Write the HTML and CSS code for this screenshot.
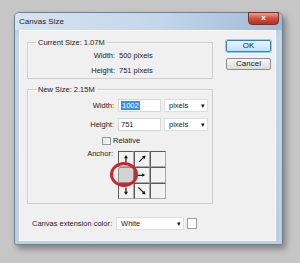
FILE: index.html
```html
<!DOCTYPE html>
<html lang="en">
<head>
  <meta charset="UTF-8" />
  <title>Canvas Size</title>
  <link rel="stylesheet" href="styles.css">
</head>
<body>
<div class="window">
  <div class="titlebar">
    <span class="title">Canvas Size</span>
    <span class="close">x</span>
  </div>

  <div class="client">
    <div class="main">
      <!-- Current size -->
      <div class="group">
        <span class="group-title">Current Size: 1.07M</span>
        <div class="info">
          <span class="lbl">Width:</span><span>500 pixels</span>
          <span class="lbl">Height:</span><span>751 pixels</span>
        </div>
      </div>

      <!-- New size -->
      <div class="group group-new">
        <span class="group-title">New Size: 2.15M</span>
        <div class="form">
          <span class="lbl">Width:</span>
          <div class="fields">
            <span class="input"><span class="sel">1002</span></span>
            <span class="select">pixels<span class="caret">▾</span></span>
          </div>
          <span class="lbl">Height:</span>
          <div class="fields">
            <span class="input">751</span>
            <span class="select">pixels<span class="caret">▾</span></span>
          </div>
          <div class="relative"><span class="check"></span>Relative</div>
          <span class="lbl lbl-top">Anchor:</span>
          <div class="anchor">
            <span class="cell">
              <svg viewBox="0 0 14 14"><path d="M7 12V5" stroke="#111" stroke-width="1.6"/><path d="M7 1.5L4.3 6h5.4z" fill="#111"/></svg>
            </span>
            <span class="cell">
              <svg viewBox="0 0 14 14"><path d="M3 11L9.5 4.5" stroke="#111" stroke-width="1.6"/><path d="M12 2L6.8 3.6l3.6 3.6z" fill="#111"/></svg>
            </span>
            <span class="cell"></span>
            <span class="cell active"></span>
            <span class="cell">
              <svg viewBox="0 0 14 14"><path d="M1 7.5h7" stroke="#111" stroke-width="1.6"/><path d="M11.5 7L7 4.5v5z" fill="#111"/></svg>
            </span>
            <span class="cell"></span>
            <span class="cell">
              <svg viewBox="0 0 14 14"><path d="M7 2v7" stroke="#111" stroke-width="1.6"/><path d="M7 12.5L4.3 8h5.4z" fill="#111"/></svg>
            </span>
            <span class="cell">
              <svg viewBox="0 0 14 14"><path d="M2 2l7 7" stroke="#111" stroke-width="1.6"/><path d="M12 12L6.8 10.4l3.6-3.6z" fill="#111"/></svg>
            </span>
            <span class="cell"></span>
            <span class="ring"></span>
          </div>
        </div>
      </div>

      <div class="ext">
        <span>Canvas extension color:</span>
        <span class="select select-wide">White<span class="caret">▾</span></span>
        <span class="swatch"></span>
      </div>
    </div>

    <div class="buttons">
      <span class="btn btn-default">OK</span>
      <span class="btn">Cancel</span>
    </div>
  </div>
</div>
</body>
</html>
```

FILE: styles.css
```css
* {
  box-sizing: border-box;
}

body {
  margin: 0;
  padding: 12px 0 0 14px;
  background: #c6c6c6;
  font-family: 'Liberation Sans', Arial, sans-serif;
  font-size: 7.5px;
  color: #222;
  height: 263px;
  overflow: hidden;
}

.window {
  width: 269px;
  height: 233px;
  border: 1px solid #6f8094;
  border-radius: 5px 5px 2px 2px;
  background: linear-gradient(to bottom, #b3c9e0, #c4d5e8 12%, #bccfe3);
  box-shadow: 3px 4px 6px rgba(0, 0, 0, 0.35);
}

.titlebar {
  height: 17px;
  display: flex;
  justify-content: space-between;
  align-items: center;
  padding-left: 4px;
  background: linear-gradient(to right, #d6e3f0, #c3d6ea 55%, #9fb9d5);
  border-radius: 4px 4px 0 0;
}

.title {
  font-size: 8px;
  color: #1e1e1e;
}

.close {
  align-self: flex-start;
  margin-top: -1px;
  margin-right: 3px;
  width: 31px;
  height: 13px;
  border: 1px solid #7a3028;
  border-radius: 0 0 4px 4px;
  background: linear-gradient(to bottom, #e8a294, #d1503d 50%, #b9301f);
  color: #fff;
  font-weight: bold;
  font-size: 8px;
  line-height: 10px;
  text-align: center;
}

.client {
  margin: 0 6px 0 4px;
  height: 211px;
  background: #f0f0f0;
  border: 1px solid #f9f9f9;
  display: grid;
  grid-template-columns: 186px 45px;
  column-gap: 13px;
  align-items: start;
  padding: 11px 0 0 7px;
}

.main {
  display: flex;
  flex-direction: column;
}

.group {
  border: 1px solid #cdcdcd;
  box-shadow: inset 1px 1px 0 #fafafa;
}

.group-title {
  display: block;
  width: max-content;
  margin: -6px 0 0 8px;
  padding: 0 2px;
  background: #f0f0f0;
  line-height: 11px;
}

.info {
  display: grid;
  grid-template-columns: 87px auto;
  column-gap: 4px;
  line-height: 15px;
}

.lbl {
  text-align: right;
}

.group-new {
  margin-top: 10px;
  padding-bottom: 4px;
}

.form {
  margin-top: 4px;
  display: grid;
  grid-template-columns: 86px auto;
  column-gap: 4px;
  row-gap: 6px;
  align-items: center;
}

.fields {
  display: flex;
  gap: 3px;
}

.input {
  width: 43px;
  height: 13px;
  background: #fff;
  border: 1px solid #d8d8d8;
  padding-left: 2px;
  line-height: 11px;
}

.sel {
  background: #3f8ee0;
  color: #fff;
  padding: 0 1px;
}

.select {
  width: 44px;
  height: 13px;
  background: #fff;
  border: 1px solid #dedede;
  padding: 0 2px 0 4px;
  line-height: 11px;
  display: flex;
  justify-content: space-between;
}

.caret {
  font-size: 7px;
  color: #111;
}

.relative {
  grid-column: 1 / 3;
  display: flex;
  align-items: center;
  gap: 2px;
  padding-left: 74px;
  margin-top: -2px;
  line-height: 11px;
}

.check {
  width: 9px;
  height: 8px;
  border: 1px solid #9a9a9a;
  background: linear-gradient(135deg, #e4e4e4, #fbfbfb);
}

.lbl-top {
  align-self: start;
  line-height: 8px;
  margin-top: -2px;
  margin-right: 1px;
}

.anchor {
  position: relative;
  margin-top: -1px;
  width: 48px;
  height: 48px;
  display: grid;
  grid-template-columns: repeat(3, 16px);
  grid-template-rows: repeat(3, 16px);
}

.cell {
  border: 1px solid #5a5a5a;
  border-right-color: #a8a8a8;
  border-bottom-color: #a8a8a8;
  background: #f2f2f2;
  display: flex;
  align-items: center;
  justify-content: center;
}

.cell svg {
  width: 10px;
  height: 10px;
}

.cell.active {
  background: #d3d3d3;
  border-color: #8c8c8c;
  border-radius: 2px;
}

.ring {
  position: absolute;
  left: -8px;
  top: 11px;
  width: 28px;
  height: 25px;
  border: 3px solid #d2232a;
  border-radius: 50%;
}

.ext {
  margin-top: 13px;
  padding-left: 5px;
  display: flex;
  align-items: center;
  gap: 4px;
}

.select-wide {
  width: 68px;
}

.swatch {
  margin-left: -1px;
  width: 10px;
  height: 11px;
  background: #fff;
  border: 1px solid #9d9d9d;
}

.buttons {
  margin-top: -2px;
  display: flex;
  flex-direction: column;
  gap: 6px;
}

.btn {
  height: 12px;
  border: 1px solid #8e8e8e;
  border-radius: 2px;
  background: linear-gradient(to bottom, #f6f6f6, #dcdcdc);
  text-align: center;
  line-height: 10px;
  font-size: 8px;
}

.btn-default {
  border-color: #3c7fb1;
  background: linear-gradient(to bottom, #e6f4fc, #bfe3f7);
  box-shadow: 0 0 0 1px #8ed0f2;
}
```
